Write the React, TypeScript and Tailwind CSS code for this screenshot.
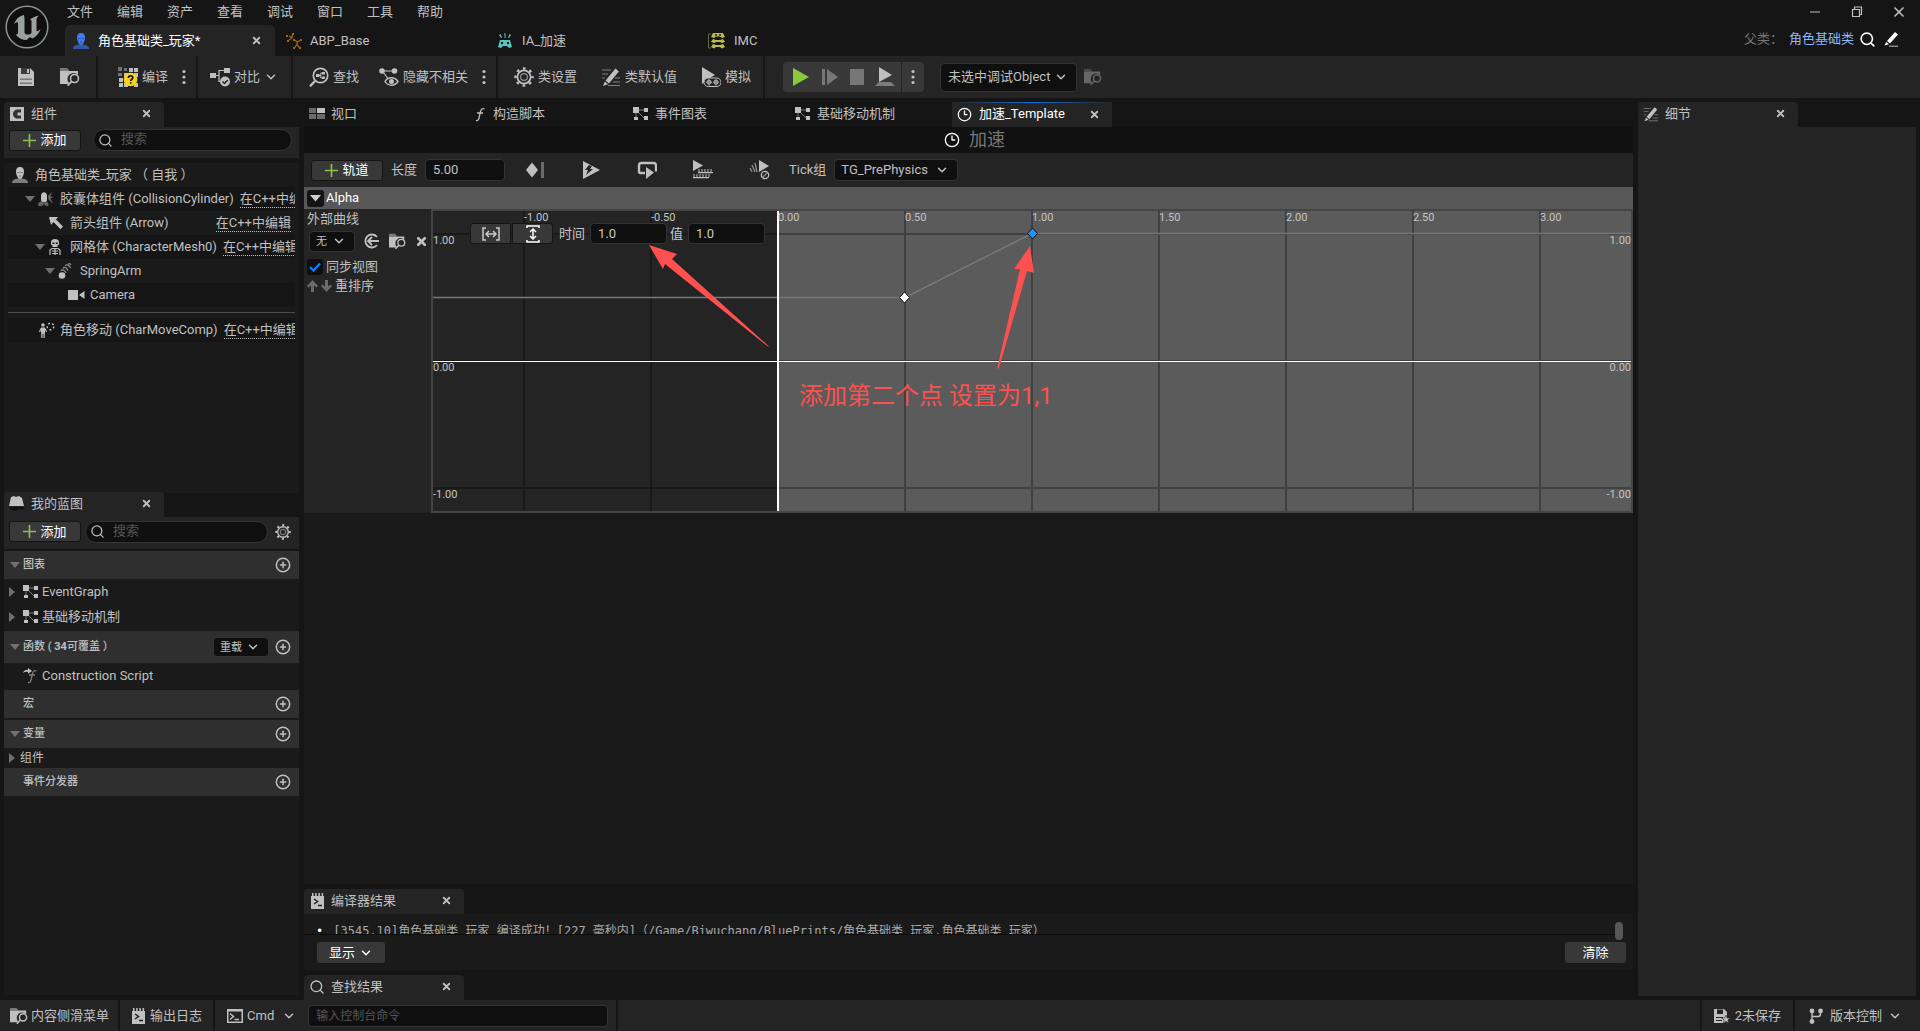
import type { ReactNode } from "react";
import { ChevronDown, CirclePlus, Search, X, Clock3, Minus } from "lucide-react";

type P = { children: ReactNode; w?: number; h?: number; vb?: string; className?: string };
const Svg = ({ children, w = 20, h = 20, vb, className = "" }: P) => (
  <svg width={w} height={h} viewBox={vb ?? `0 0 ${w} ${h}`} className={`shrink-0 ${className}`} fill="currentColor" aria-hidden="true">
    {children}
  </svg>
);

const Gear = ({ size = 20 }: { size?: number }) => (
  <Svg w={size} h={size} vb="0 0 20 20">
    <circle cx="10" cy="10" r="6.600" fill="none" stroke="currentColor" strokeWidth="1.700" />
    <circle cx="10" cy="10" r="8.500" fill="none" stroke="currentColor" strokeWidth="2.400" strokeDasharray="2.700 3.975" strokeDashoffset="1.350" />
    <circle cx="10" cy="10" r="3.400" fill="none" stroke="currentColor" strokeWidth="1.200" opacity=".7" />
  </Svg>
);
const FolderSearch = ({ size = 20 }: { size?: number }) => (
  <Svg w={size} h={size} vb="0 0 20 20">
    <path d="M0 3V1h7l2 2v1H0z" opacity=".55" />
    <path d="M0 4h18v4a6 6 0 0 0-9 8l-1 1H0z" />
    <circle cx="14.500" cy="11.500" r="4" fill="#242424" stroke="currentColor" strokeWidth="1.600" />
    <path d="m11.600 14.400-4 4.200" stroke="currentColor" strokeWidth="1.800" />
  </Svg>
);
const SaveIcon = () => (
  <Svg>
    <path d="M2 1h12l4 4v14H2z" />
    <path d="M5 1h9v6H5z" fill="#242424" opacity=".85" />
    <path d="M11 2h2v4h-2z" fill="#c0c0c0" />
    <path d="M4 11.500h12v1.500H4zm0 4h12V17H4z" fill="#777" />
  </Svg>
);
const CompileIcon = () => (
  <Svg>
    <path d="M0 0h4v4H0z" opacity=".5" />
    <path d="M6 1h3v3H6zM0 6h4v3H0z" opacity=".5" />
    <path d="M11 1h4v4h-4zM16 1h4v4h-4zM6 6h4v4H6zM11 6h4v4h-4zM16 6h4v4h-4zM1 11h4v4H1zM6 11h4v4H6zM1 16h4v4H1zM6 16h4v4H6zM16 16h4v4h-4z" />
    <circle cx="12.500" cy="12.500" r="6.800" fill="#f9d41c" />
    <path d="M10.400 11c0-3 4.400-2.800 4.400-.3 0 1.600-2.100 1.500-2.100 3.200M12.700 15.200v1.600" fill="none" stroke="#111" strokeWidth="1.700" />
  </Svg>
);
const DiffIcon = () => (
  <Svg>
    <path d="M0 6h6v5H0zM14 1h6v5h-6z" />
    <path d="M6 8.500h3V3.500h5M9 8.500v6h2" fill="none" stroke="currentColor" strokeWidth="1.200" />
    <circle cx="15" cy="14.500" r="5" />
    <path d="m12.500 14.500 2 2 3.200-3.600" fill="none" stroke="#242424" strokeWidth="1.500" />
  </Svg>
);
const FindIcon = () => (
  <Svg>
    <circle cx="11.500" cy="8.500" r="7.200" fill="none" stroke="currentColor" strokeWidth="1.700" />
    <path d="M6 14 1 19.300" stroke="currentColor" strokeWidth="2.400" />
    <path d="M7 7h3.500v3H7zM13 5h3v2.500h-3zM13 9.500h3V12h-3z" />
    <path d="M10 8.500h2M13 6h-1.200v5H13" fill="none" stroke="currentColor" />
  </Svg>
);
const HideIcon = () => (
  <Svg>
    <circle cx="3" cy="4" r="2.800" />
    <circle cx="15.500" cy="4" r="2.800" />
    <path d="M3 4h12M4 5l6 8" stroke="currentColor" strokeWidth="1.200" />
    <path d="M6 14.500c3-5 9.500-5 13 0-3.500 5-10 5-13 0z" fill="#242424" stroke="currentColor" strokeWidth="1.400" />
    <circle cx="12.500" cy="14.500" r="2.500" />
  </Svg>
);
const PencilLines = ({ size = 20 }: { size?: number }) => (
  <Svg w={size} h={size} vb="0 0 20 20">
    <path d="M1 3h9M1 7h6M1 11h3M14 11h5M12 15h7M7 18.500h12" stroke="currentColor" strokeWidth="1" opacity=".6" />
    <path d="m14.500 1.500 3.300 3L8 16.500l-3.500-3zM3.800 14.500l3.200 2.800L2 19z" />
  </Svg>
);
const SimIcon = () => (
  <Svg>
    <path d="M1 0l13 8-6 3.500L1 17z" />
    <rect x="3" y="11" width="17" height="8.500" rx="4.200" fill="#242424" stroke="currentColor" strokeWidth="1" />
    <circle cx="8" cy="15.200" r="2" fill="none" stroke="currentColor" />
    <circle cx="15" cy="15.200" r="2" fill="none" stroke="currentColor" />
    <path d="M8 12v6.500M5 15.200h6M15 12v6.500M12 15.200h6" stroke="currentColor" strokeWidth=".8" />
  </Svg>
);
const Dots = () => (
  <Svg w={4} h={16}>
    <circle cx="2" cy="2.500" r="1.600" />
    <circle cx="2" cy="8" r="1.600" />
    <circle cx="2" cy="13.500" r="1.600" />
  </Svg>
);
const GraphIcon = () => (
  <Svg w={16} h={14}>
    <path d="M0 0h6v6H0zM11 1h4v4h-4zM1 10h4v3H1zM11 9h4v4h-4z" />
    <path d="M6 3h5M5 5l6 6M3 6v4" stroke="currentColor" opacity=".6" />
  </Svg>
);
const ViewportIcon = () => (
  <Svg w={16} h={12}>
    <path d="M0 0h7v5H0z" opacity=".5" />
    <path d="M8 0h8v5H8z" />
    <path d="M0 6h7v5H0zM8 6h8v5H8z" opacity=".5" />
  </Svg>
);
const FuncIcon = ({ arrow = false }: { arrow?: boolean }) => (
  <Svg w={16} h={16}>
    <path d="M13.500 3c-2-1-3.500 0-4 2.500L8 12c-.5 2.200-1.600 3-3 2.400M6 7h6" fill="none" stroke="currentColor" strokeWidth="1.300" opacity={arrow ? 0.6 : 1} />
    {arrow && <path d="M0 5c1-3 3-3.500 5-3.200V0l4 3-4 2.800V4C3 3.600 1.500 4 0 5z" />}
  </Svg>
);
const LogIcon = () => (
  <Svg w={13} h={16}>
    <path d="M0 3h13v13H0zM1 0h1.500v3H1zM4.200 0h1.500v3H4.200zM7.400 0h1.500v3H7.400zM10.600 0h1.500v3h-1.500z" />
    <path d="m3 6 3.500 2.500L3 11M7 12.500h4" fill="none" stroke="#222" strokeWidth="1.500" />
  </Svg>
);
const TerminalIcon = () => (
  <Svg w={16} h={14}>
    <path d="M0 0h16v14H0z" />
    <path d="M1.500 2.500h13v10h-13z" fill="#242424" />
    <path d="m3 4.500 3.500 3-3.500 3M7.500 10.500H12" fill="none" stroke="currentColor" strokeWidth="1.500" />
  </Svg>
);
const Plus = () => <Svg w={13} h={13} className="text-[#8bc24a]"><path d="M5.700 0h1.600v5.700H13v1.600H7.300V13H5.700V7.300H0V5.700h5.700z" /></Svg>;
const Tri = ({ open = true }: { open?: boolean }) => (
  <Svg w={10} h={10} className="text-[#707070]">{open ? <path d="M0 2h10L5 8z" /> : <path d="M2 0v10l6-5z" />}</Svg>
);
const Person = ({ className = "" }: { className?: string }) => (
  <Svg w={16} h={16} className={className}>
    <path d="M0 16c0-3 2-3.700 6-4.500h4c4 .8 6 1.500 6 4.500z" opacity=".6" />
    <path d="M8 0c3 0 4.200 2 4 5-.3 3.500-2 7-4 7S4.300 8.500 4 5c-.2-3 1-5 4-5z" />
    <path d="M5.500 5.500h2M8.700 5.500h2M7 9h2.200" stroke="#222" strokeWidth=".9" opacity=".6" />
  </Svg>
);
const Close = () => <X size={11} strokeWidth={4} className="shrink-0 text-[#c0c0c0]" />;
const Chev = () => <ChevronDown size={14} strokeWidth={2.5} className="shrink-0" />;
const Sep = () => <span className="w-[2px] shrink-0 self-stretch bg-[#161616]" />;

const Tool = ({ icon, label, tail }: { icon: ReactNode; label: string; tail?: ReactNode }) => (
  <button className="flex items-center gap-1 whitespace-nowrap">{icon}<span>{label}</span>{tail}</button>
);
const PlusButton = ({ label }: { label: string }) => (
  <button className="flex h-[21px] w-[72px] shrink-0 items-center justify-center gap-1 rounded-[3px] border border-[#141414] bg-[#383838] text-white">
    <Plus />{label}
  </button>
);
const DockTab = ({ icon, label }: { icon: ReactNode; label: string }) => (
  <div className="flex h-[25px] w-40 items-center rounded-t-[4px] bg-[#242424] pb-[2px] pl-[5px] pr-3">
    <span className="flex w-[22px] items-center">{icon}</span>
    <span className="flex-1">{label}</span>
    <button aria-label={`关闭${label}`}><Close /></button>
  </div>
);
const SearchBox = ({ label }: { label: string }) => (
  <label className="flex h-[22px] min-w-0 flex-1 items-center gap-2 rounded-full border border-[#333] bg-[#0f0f0f] px-1">
    <Search size={15} className="shrink-0" />
    <input aria-label={label} placeholder="搜索" className="w-full min-w-0 bg-transparent pb-[2px] outline-none placeholder:text-[#555]" />
  </label>
);
const Drop = ({ value, label, box, pad = "pl-2" }: { value: string; label: string; box: string; pad?: string }) => (
  <span className={`relative flex shrink-0 items-center rounded-[4px] border border-[#333] bg-[#0f0f0f] ${box}`}>
    <select aria-label={label} className={`h-full w-full appearance-none bg-transparent outline-none ${pad}`}>
      <option>{value}</option>
    </select>
    <ChevronDown size={14} strokeWidth={2.5} className="pointer-events-none absolute right-2" />
  </span>
);

const CapsuleIcon = () => (
  <Svg w={16} h={16}>
    <path d="M3 5c0-5 6-5 6 0v4c0 3-6 3-6 0z" />
    <path d="M0 15c0-3 1-4 3-4.500 2 1.500 4 1.500 6 0 1 1.500 1.500 2.500 1.500 4.500H8l-2-2-2 2zM10 5l4-4-1.500 4.500 3 .5-3 1.500 2.500 5-4.500-4z" opacity=".45" />
  </Svg>
);
const ArrowIcon = () => <Svg w={16} h={16}><path d="M1 2h9L8 4.500l7 7-2.500 2.800L5.500 7 3 10z" /></Svg>;
const SkeletonIcon = () => (
  <Svg w={14} h={17}>
    <path d="M3 3c0-4 8-4 8 0v3H9.500v2h-5V6H3z" />
    <path d="M4.500 3.500h2v1.500h-2zM7.800 3.500h2V5h-2z" fill="#151515" />
    <path d="M2 16V11l2-1.500h6L12 11v5M7 9v7M4 12h6M4 14.500h6" fill="none" stroke="currentColor" strokeWidth="1.200" />
  </Svg>
);
const SpringIcon = () => (
  <Svg w={14} h={16}>
    <circle cx="4" cy="12.500" r="3.300" />
    <path d="M3 8c1-2 4-1 5 2M5 5.500c1-2 4-1 5 2M7.500 3c1-2 4-1 5 2M10 1c1.500-.6 2.500 0 3 1" fill="none" stroke="currentColor" strokeWidth="1.200" opacity=".7" />
  </Svg>
);
const CameraIcon = () => <Svg w={17} h={12}><path d="M0 1h10v10H0zM11 6l5.500-4v8z" /></Svg>;
const MoveIcon = () => (
  <Svg w={17} h={17}>
    <circle cx="5" cy="3" r="1.800" />
    <path d="M3 5.500h4V10h-.2v6H5.500v-4h-1v4H3.200v-6H3z" />
    <path d="M1.500 10 3 6.500M8.500 10 7 6.500" stroke="currentColor" strokeWidth="1.200" />
    <circle cx="12.500" cy="4.500" r="3.300" fill="none" stroke="currentColor" strokeWidth="1.400" strokeDasharray="2 2.200" />
  </Svg>
);

const TREE: { indent: string; icon: ReactNode; label: string; tri?: boolean; link?: boolean; alt?: boolean; end?: boolean }[] = [
  { indent: "pl-[17px]", tri: true, icon: <CapsuleIcon />, label: "胶囊体组件 (CollisionCylinder)", link: true, alt: true },
  { indent: "pl-[27px]", icon: <ArrowIcon />, label: "箭头组件 (Arrow)", link: true, end: true },
  { indent: "pl-[27px]", tri: true, icon: <SkeletonIcon />, label: "网格体 (CharacterMesh0)", link: true, alt: true },
  { indent: "pl-[37px]", tri: true, icon: <SpringIcon />, label: "SpringArm" },
  { indent: "pl-[47px]", icon: <CameraIcon />, label: "Camera", alt: true },
];
const TreeRow = ({ indent, icon, label, tri, link, alt, end }: (typeof TREE)[number]) => (
  <li className={`flex h-6 items-center overflow-hidden whitespace-nowrap ${indent} ${alt ? "bg-[#151515]" : ""}`}>
    <span className="flex w-[13px] shrink-0">{tri && <Tri />}</span>
    <span className="flex w-[22px] shrink-0">{icon}</span>
    <span>{label}</span>
    {link && (
      <a href="#edit" className={`border-b border-dotted border-[#c0c0c0] leading-4 ${end ? "ml-auto mr-1" : "ml-[6px]"}`}>在C++中编辑</a>
    )}
  </li>
);

const Section = ({ label, name, open, children, tall }: { label: ReactNode; name: string; open?: boolean; children?: ReactNode; tall?: boolean }) => (
  <div className={`flex items-center bg-[#2f2f2f] pl-[6px] pr-2 text-[11px] ${tall ? "h-8" : "h-7"}`}>
    <span className="flex w-[13px]">{open && <Tri />}</span>
    <h3 className="flex-1 font-medium">{label}</h3>
    {children}
    <button aria-label={`添加${name}`} className="ml-[6px]"><CirclePlus size={16} strokeWidth={2.2} /></button>
  </div>
);

const LeftColumn = () => (
  <aside className="flex w-[295px] shrink-0 flex-col pb-[5px]">
    <DockTab label="组件" icon={<Svg w={14} h={14} className="ml-px"><path d="M0 0h14v14H0z" /><path d="M11 2.500H6c-4 2-4 7 0 9h5v-3H7.500v-3H11z" fill="#333" /></Svg>} />
    <div className="flex h-[31px] items-center gap-3 bg-[#242424] pb-[5px] pl-[5px] pr-[7px]"><PlusButton label="添加" /><SearchBox label="搜索组件" /></div>
    <ul className="mt-[5px] h-[330px] bg-[#1a1a1a] px-1">
      <li className="flex h-6 items-center gap-[7px] pl-1"><Person />角色基础类_玩家 （ 自我 ）</li>
      {TREE.map((r) => <TreeRow key={r.label} {...r} />)}
      <li className="my-[5px] h-px bg-[#4a4a4a]" />
      <TreeRow indent="pl-[17px]" icon={<MoveIcon />} label="角色移动 (CharMoveComp)" link alt />
    </ul>
    <div className="mt-[-1px] flex flex-1 flex-col">
      <DockTab label="我的蓝图" icon={<Svg w={15} h={15}><path d="M2 1l3-1 2 1 3-1 3 2 2 8H0z" /><path d="M0 11h15l-1 3-4-1-3 2-5-1z" fill="#111" /></Svg>} />
      <div className="flex h-8 items-center bg-[#242424] pb-[3px] pl-[5px] pr-2">
        <PlusButton label="添加" /><span className="w-1" /><SearchBox label="搜索蓝图" />
        <button aria-label="设置" className="ml-[7px]"><Gear size={16} /></button>
      </div>
      <div className="mt-[2px] flex-1 bg-[#1a1a1a]">
        <Section label="图表" name="图表" open />
        <ul>
          <li className="flex h-[25px] items-center gap-[6px] pl-[3px]"><Tri open={false} /><span className="flex items-center gap-[3px]"><GraphIcon />EventGraph</span></li>
          <li className="mb-[2px] flex h-[25px] items-center gap-[6px] pl-[3px]"><Tri open={false} /><span className="flex items-center gap-[3px]"><GraphIcon />基础移动机制</span></li>
        </ul>
        <Section label={<>函数 ( <b>34</b>可覆盖 ）</>} name="函数" open tall><Drop value="重载" label="重载" box="h-5 w-14" pad="pl-[6px]" /></Section>
        <div className="mb-[2px] flex h-[25px] items-center gap-[3px] pl-[19px]"><FuncIcon arrow />Construction Script</div>
        <Section label="宏" name="宏" />
        <div className="h-[2px]" />
        <Section label="变量" name="变量" open />
        <div className="flex h-5 items-center gap-[3px] pl-[3px] text-[12px]"><Tri open={false} />组件</div>
        <Section label="事件分发器" name="事件分发器" />
      </div>
    </div>
  </aside>
);

const GRID_X = [["-1.00", 93], ["-0.50", 220], ["0.00", 347], ["0.50", 474], ["1.00", 601], ["1.50", 728], ["2.00", 855], ["2.50", 982], ["3.00", 1109]] as const;
const GRID_Y = [["1.00", 25], ["0.00", 152], ["-1.00", 279]] as const;

const Curve = () => (
  <div className="relative h-[304px] min-w-0 flex-1 overflow-hidden border-2 border-[#444] bg-[#5b5b5b]">
    <svg className="block h-full w-full" role="img" aria-label="Alpha 曲线">
      <rect width="345" height="300" fill="#242424" />
      {GRID_X.map(([t, x]) => <rect key={t} x={x - 3} width="2" height="300" className={x < 345 ? "fill-[#191919]" : "fill-[#404040]"} />)}
      {GRID_Y.map(([t, y]) => (
        <g key={t}>
          <rect y={y - 3} width="345" height="2" fill="#191919" />
          <rect x="345" y={y - 3} width="100%" height="2" fill="#404040" />
        </g>
      ))}
      <path d="M0 86.500H472L599 22.500H4000" fill="none" stroke="#787878" strokeWidth="1.500" />
      <rect y="150" width="100%" height="1" fill="#fff" />
      <rect x="344" width="2" height="300" fill="#fff" />
      <g className="text-[11px]" fill="#c4c4c4">
        {GRID_X.map(([t, x]) => <text key={t} x={x - 2} y="10">{t}</text>)}
        {GRID_Y.map(([t, y]) => (
          <g key={t}>
            <text x="0" y={y + 8}>{t}</text>
            <text x="100%" y={y + 8} textAnchor="end">{t}</text>
          </g>
        ))}
      </g>
      <path d="m471.500 81 5 5.500-5 5.500-5-5.500z" fill="#fff" stroke="#111" />
      <path d="m599.500 17 5 5.500-5 5.500-5-5.500z" fill="#1a94ff" stroke="#111" />
      <path d="M216 34 244 43 239 48 335 134.500 336 136 333 134 232 53 230 58z" fill="#ff5050" />
      <path d="M597 35 601 62 594 60 566 157 564.500 158 564.500 156 587 58 581 58z" fill="#ff5050" />
      <text x="366" y="193" fill="#ff5050" className="text-[24px]">添加第二个点 设置为1,1</text>
    </svg>
    <div className="absolute left-[37px] top-3 flex items-center text-[#c8c8c8]">
      <button aria-label="水平适配" className="flex h-[21px] w-[41px] items-center justify-center rounded-l-[3px] border border-[#141414] bg-[#383838]">
        <Svg w={18} h={14}><path d="M4 1H1v12h3M14 1h3v12h-3M4 7h10M7 4 4 7l3 3M11 4l3 3-3 3" fill="none" stroke="currentColor" strokeWidth="1.500" /></Svg>
      </button>
      <button aria-label="垂直适配" className="ml-px flex h-[21px] w-[41px] items-center justify-center rounded-r-[3px] border border-[#141414] bg-[#383838] text-white">
        <Svg w={14} h={18}><path d="M1 3V1h12v2M1 15v2h12v-2M7 4v10M4 7l3-3 3 3M4 11l3 3 3-3" fill="none" stroke="currentColor" strokeWidth="1.500" /></Svg>
      </button>
      <label className="ml-[6px] flex items-center gap-[5px]">时间<input defaultValue="1.0" className="h-[21px] w-[77px] rounded-[4px] border border-[#333] bg-[#0f0f0f] px-[7px]" /></label>
      <label className="ml-[3px] flex items-center gap-[5px]">值<input defaultValue="1.0" className="h-[21px] w-[77px] rounded-[4px] border border-[#333] bg-[#0f0f0f] px-[7px]" /></label>
    </div>
  </div>
);

const CenterTab = ({ icon, label }: { icon: ReactNode; label: string }) => (
  <button className="mr-[2px] flex h-[25px] w-40 items-center pb-[2px] pl-[5px] text-left"><span className="flex w-[22px]">{icon}</span>{label}</button>
);

const Center = () => (
  <main className="flex min-w-0 flex-1 flex-col">
    <nav className="flex">
      <CenterTab icon={<ViewportIcon />} label="视口" />
      <CenterTab icon={<FuncIcon />} label="构造脚本" />
      <CenterTab icon={<GraphIcon />} label="事件图表" />
      <CenterTab icon={<GraphIcon />} label="基础移动机制" />
      <div className="w-40 text-white">
        <div className="h-px bg-linear-to-r from-[#242424] via-[#0070e0] to-[#242424]" />
        <div className="flex h-6 items-center bg-[#242424] pb-[2px] pl-[5px] pr-3">
          <Clock3 size={15} className="mr-[7px]" /><span className="flex-1">加速_Template</span>
          <button aria-label="关闭加速_Template"><Close /></button>
        </div>
      </div>
    </nav>
    <h1 className="flex h-[26px] items-center justify-center gap-[9px] bg-[#111] pl-3 text-[18px] text-[#777]"><Clock3 size={16} className="text-white" />加速</h1>
    <div className="flex h-[34px] items-center bg-[#242424] pl-[7px]">
      <PlusButton label="轨道" />
      <label className="ml-2 flex items-center gap-2">长度<input defaultValue="5.00" className="h-[22px] w-20 rounded-[4px] border border-[#333] bg-[#0f0f0f] px-[7px] pb-[2px]" /></label>
      <button aria-label="添加关键帧" className="ml-5"><Svg><path d="m7 2.500 6 7.500-6 7.500L1 10z" /><path d="M16 2h3v16h-3z" opacity=".45" /></Svg></button>
      <button aria-label="自动播放" className="ml-9"><Svg><path d="M2 1 19 10 2 19z" /><path d="m8 5-4 5h3l-2 5 7-6H9l2-3z" fill="#242424" /></Svg></button>
      <button aria-label="循环" className="ml-9"><Svg><path d="M8 13H3.500Q2 13 2 11.500V5.500Q2 3 4.500 3h12Q19 3 19 5.500v6" fill="none" stroke="currentColor" strokeWidth="2.400" /><path d="m9 7 8 5.500L9 19z" /></Svg></button>
      <button aria-label="使用最后关键帧" className="ml-9"><Svg><path d="M0 0l10 5.500L0 11zM0 17h16v1.300H0zM5 12h15v1.300H5z" /><path d="M1 14v3M4 14v3M7 14v3M10 14v3M13 14v3M16 14v3M6 9v3M9 9v3M12 9v3M15 9v3M18 9v3" stroke="currentColor" /></Svg></button>
      <button aria-label="忽略时间膨胀" className="ml-9"><Svg w={21}><path d="m10 0 10 6-10 6z" /><circle cx="16" cy="15" r="3.700" fill="#242424" stroke="currentColor" strokeWidth="1.300" /><path d="m13.500 17.500 5-5M1 8l2 4M3 5l3 7M6 3l2 9" stroke="currentColor" strokeWidth="1.300" opacity=".7" /></Svg></button>
      <span className="ml-[19px] mr-2">Tick组</span>
      <Drop value="TG_PrePhysics" label="Tick组" box="h-[22px] w-[124px]" pad="pl-[6px]" />
    </div>
    <section className="flex flex-1 flex-col bg-[#1a1a1a]">
      <h2 className="flex h-[22px] items-center gap-[2px] bg-[#575757] pl-[3px] text-white">
        <button aria-label="折叠" className="flex size-[17px] items-center justify-center rounded-[3px] bg-[#141414] text-[#d0d0d0]"><Svg w={11} h={7}><path d="M0 0h11L5.500 6.500z" /></Svg></button>Alpha
      </h2>
      <div className="flex">
        <div className="w-[127px] shrink-0 bg-[#242424] pl-[3px]">
          <p className="pt-[1px] leading-[18px]">外部曲线</p>
          <div className="mt-[2px] flex h-[22px] items-center pl-[2px]">
            <Drop value="无" label="外部曲线" box="h-[21px] w-[46px]" pad="pl-[6px] text-[11px]" />
            <button aria-label="使用所选" className="ml-2"><Svg w={16} h={16}><path d="M14 4a6.500 6.500 0 1 0 0 8M16 8H5M9 4 5 8l4 4" fill="none" stroke="currentColor" strokeWidth="1.800" /></Svg></button>
            <button aria-label="浏览" className="ml-[10px]"><FolderSearch size={17} /></button>
            <button aria-label="清除曲线" className="ml-[9px]"><X size={13} strokeWidth={5} /></button>
          </div>
          <label className="mt-[6px] flex h-[17px] items-center gap-[3px]">
            <span className="relative flex size-4">
              <input type="checkbox" defaultChecked className="size-4 appearance-none rounded-[3px] bg-[#0f0f0f]" />
              <Svg w={16} h={16} className="pointer-events-none absolute text-[#0a84ff]"><path d="m3 8 3.500 3.500L13 4.500" fill="none" stroke="currentColor" strokeWidth="2.200" /></Svg>
            </span>同步视图
          </label>
          <div className="mt-[2px] flex h-[18px] items-center gap-[3px]">
            <button aria-label="上移" className="text-[#6a6a6a]"><Svg w={11} h={12}><path d="m5.500 0 5.500 6-1.500 1.500L7 5.500V12H4V5.500L1.500 7.500 0 6z" /></Svg></button>
            <button aria-label="下移" className="text-[#6a6a6a]"><Svg w={11} h={12}><path d="M5.500 12 0 6l1.500-1.500L4 6.500V0h3v6.500l2.500-2L11 6z" /></Svg></button>
            重排序
          </div>
        </div>
        <Curve />
      </div>
    </section>
    <section className="mt-[5px]">
      <DockTab label="编译器结果" icon={<span className="pl-[2px]"><LogIcon /></span>} />
      <div className="flex h-14 flex-col bg-[#1a1a1a] pt-2">
        <div className="flex h-[18px] justify-between pr-[10px]">
          <p className="h-[13px] flex-1 overflow-hidden whitespace-nowrap border-b border-[#0c0c0c] pl-3 font-['DejaVu_Sans_Mono','Noto_Sans_CJK_SC',monospace] text-[12px] leading-[18px] text-[#a8a8a8]"><span className="mr-[10px] text-white">•</span>[3545.10]角色基础类_玩家 编译成功！[227 毫秒内]（/Game/Biwuchang/BluePrints/角色基础类_玩家.角色基础类_玩家）</p>
          <span className="h-[18px] w-2 rounded-full bg-[#575757]" />
        </div>
        <div className="mt-[2px] flex justify-between pl-[13px] pr-[7px] text-white">
          <button className="flex h-[21px] w-[68px] items-center justify-center gap-1 rounded-[3px] bg-[#383838]">显示<Chev /></button>
          <button className="h-[21px] w-[61px] rounded-[3px] bg-[#383838]">清除</button>
        </div>
      </div>
    </section>
    <div className="mt-[5px]"><DockTab label="查找结果" icon={<Search size={16} />} /></div>
  </main>
);

export default function App() {
  return (
    <div className="flex min-h-screen flex-col bg-[#151515] font-[Roboto,'Noto_Sans_CJK_SC',sans-serif] text-[13px] leading-5 text-[#c0c0c0]">
      <header className="flex h-14">
        <div className="flex w-[65px] shrink-0 pl-1 pt-1">
          <Svg w={46} h={46} vb="4 4 46 46">
            <circle cx="27" cy="27" r="20.800" fill="#0f0f0f" stroke="#8c9494" strokeWidth="1.500" />
            <path d="M24 15C19 16 16 19 14 24c2-2 4-2.500 4-1v10c0 1.500-1 1.500-2.500 1 2.500 4 6.500 6 11 6l3.500-3 2.500 1.500c4.500-2.500 7-5.500 8-9.500-1.500 1.500-4 3.500-4 1V20c0-2 1-3 2.500-4.500-4 .5-7 2.500-9 4l1.500 1V33c-2 2-5.500 2-7 0V18.500c0-1-.3-2-.5-3.500z" fill="#98a0a0" />
          </Svg>
        </div>
        <div className="flex min-w-0 flex-1 flex-col">
          <nav className="flex h-[25px] items-center gap-6 pb-[2px] pl-[2px]">
            {["文件", "编辑", "资产", "查看", "调试", "窗口", "工具", "帮助"].map((m) => <button key={m}>{m}</button>)}
          </nav>
          <div className="flex h-[31px] items-center">
            <div className="flex h-full w-[210px] items-center rounded-t-[5px] bg-[#242424] pl-2 pr-[13px] text-white">
              <Person className="text-[#3d7cf5]" /><span className="flex-1 pl-[9px]">角色基础类_玩家*</span><button aria-label="关闭"><Close /></button>
            </div>
            <button className="flex w-[212px] items-center gap-2 pl-[11px]">
              <Svg w={16} h={16} className="text-[#a85f10]">
                <path d="M3 3 6 5M6.500 1.500 6 5l-3 2M8.500 7l3 2 3.500-2M11.500 9l-1 3-2 3M11 12l3 3" fill="none" stroke="currentColor" strokeWidth="1.300" />
                <path d="M0 2h2v2H0zM6 0h2v2H6zM1 7h2v2H1zM7 6h2v2H7zM14 6h2v2h-2zM7 14h2v2H7zM13 14h2v2h-2z" />
              </Svg>ABP_Base
            </button>
            <button className="flex w-[212px] items-center gap-[10px] pl-[11px]">
              <Svg w={14} h={16} className="text-[#5cc4bf]"><path d="M2 7h10l2 7-3 1-2-2H5l-2 2-3-1zM2.500 1l1.500 4H3L1 2zM6.500 0h1v5h-1zM11.500 1l1.500 1-2 3h-1z" /><circle cx="4" cy="10" r="1.200" fill="#151515" /><circle cx="10" cy="10" r="1.200" fill="#151515" /></Svg>IA_加速
            </button>
            <button className="flex items-center gap-[9px] pl-[9px]">
              <Svg w={17} h={16} className="text-[#b9bb52]">
                <path d="M5 0h10l2 4-3 1-2-1.500H8L6 5 3 4zM5 6l3 1h4l3-1 2 3-3 1-2-1H8l-2 1-3-1zM5 11l3 1h4l3-1 2 3-3 1.500-2-1.500H8l-2 1.500L3 14z" />
                <path d="M3 1H.500v14H3" fill="none" stroke="currentColor" opacity=".5" />
                <circle cx="8" cy="2" r=".9" fill="#151515" /><circle cx="12" cy="2" r=".9" fill="#151515" />
              </Svg>IMC
            </button>
          </div>
        </div>
        <div className="flex flex-col items-end">
          <div className="flex h-6 items-center gap-[26px] pr-[13px]">
            <button aria-label="最小化"><Minus size={16} strokeWidth={1.5} /></button>
            <button aria-label="还原"><Svg w={16} h={16}><path d="M3.500 5.500h7v7h-7zM5.500 5V3h7v7.500h-2" fill="none" stroke="currentColor" strokeWidth="1.200" /></Svg></button>
            <button aria-label="关闭窗口"><X size={16} strokeWidth={2.5} /></button>
          </div>
          <div className="flex h-[30px] items-center pr-[21px] text-white">
            <span className="text-[#777]">父类：</span>
            <a href="#parent" className="ml-[6px] text-[#8ab8ff]">角色基础类</a>
            <button aria-label="查找父类" className="ml-[5px]"><Search size={17} strokeWidth={2.3} /></button>
            <button aria-label="编辑父类" className="ml-2"><Svg w={15} h={15}><path d="m11 0 3 2.500L6 11.500 3 9zM2.200 10 5 12.200.500 13.500zM5 13.700h9v.9H5z" /></Svg></button>
          </div>
        </div>
      </header>
      <div className="flex h-[42px] items-center bg-[#242424]">
        <div className="flex gap-6 px-4"><button aria-label="保存"><SaveIcon /></button><button aria-label="浏览"><FolderSearch /></button></div>
        <Sep />
        <div className="flex items-center gap-[14px] pl-5 pr-[10px]"><Tool icon={<CompileIcon />} label="编译" /><button aria-label="编译选项"><Dots /></button></div>
        <Sep />
        <div className="pl-3 pr-[13px]"><Tool icon={<DiffIcon />} label="对比" tail={<Chev />} /></div>
        <Sep />
        <div className="flex items-center gap-5 pl-4"><Tool icon={<FindIcon />} label="查找" /><Tool icon={<HideIcon />} label="隐藏不相关" /></div>
        <button aria-label="隐藏选项" className="pl-[14px] pr-[10px]"><Dots /></button>
        <Sep />
        <div className="flex items-center gap-6 pl-4 pr-3"><Tool icon={<Gear />} label="类设置" /><Tool icon={<PencilLines />} label="类默认值" /><Tool icon={<SimIcon />} label="模拟" /></div>
        <Sep />
        <div className="ml-[18px] flex h-[30px] items-center rounded-[4px] bg-[#383838] pl-[9px]">
          <button aria-label="播放"><Svg w={18} h={18} className="text-[#8bc83c]"><path d="M1 0 17 9 1 18z" /></Svg></button>
          <button aria-label="步进" className="ml-[11px] text-[#777]"><Svg w={18} h={18}><path d="M1 1h3v16H1zM6 1l11 8-11 8z" /></Svg></button>
          <button aria-label="停止" className="ml-[10px] text-[#777]"><Svg w={16} h={16}><path d="M1 0h14v16H1z" /></Svg></button>
          <button aria-label="弹出" className="ml-[10px]"><Svg><path d="M4 0 17 8 4 15z" /><path d="M0 19l4-4h12l4 4z" opacity=".5" /></Svg></button>
          <span className="ml-[6px] h-full w-px bg-[#222]" />
          <button aria-label="播放选项" className="px-[9px]"><Dots /></button>
        </div>
        <span className="w-4" />
        <Drop value="未选中调试Object" label="调试对象" box="h-[29px] w-[137px]" pad="pl-[7px]" />
        <button aria-label="浏览调试对象" className="ml-[7px] text-[#666]"><FolderSearch size={18} /></button>
      </div>
      <div className="flex flex-1 pl-1 pt-1">
        <LeftColumn />
        <span className="w-[5px] shrink-0" />
        <Center />
        <aside className="ml-[5px] mr-1 flex w-[278px] shrink-0 flex-col pb-1">
          <DockTab label="细节" icon={<PencilLines size={16} />} />
          <div className="flex-1 bg-[#242424]" />
        </aside>
      </div>
      <footer className="flex h-[31px] items-center whitespace-nowrap bg-[#242424]">
        <button className="flex items-center gap-[3px] pl-[10px] pr-[9px] pt-px"><FolderSearch size={18} />内容侧滑菜单</button>
        <Sep />
        <button className="flex items-center gap-[5px] pl-3 pr-[11px] pt-px"><LogIcon />输出日志</button>
        <Sep />
        <button className="flex items-center gap-1 pl-3 pr-3 pt-px"><TerminalIcon />Cmd<span className="pl-1"><Chev /></span></button>
        <input aria-label="控制台命令" placeholder="输入控制台命令" className="h-[22px] w-[300px] rounded-[4px] border border-[#333] bg-[#0f0f0f] px-[7px] text-[12px] placeholder:text-[#555]" />
        <span className="w-2" />
        <Sep />
        <span className="flex-1" />
        <Sep />
        <button className="flex items-center gap-1 px-3 pt-px"><Svg w={17} h={16}><path d="M0 1h10l3 3v5l-3 6H0z" /><path d="M3 1.500h6V6H3zM2 9h7v1H2zm0 3h6v1H2z" fill="#242424" /><path d="m12 7 1.200 3 3.300.1-2.600 2 1 3.300-2.900-1.900-2.800 1.900 1-3.200-2.600-2.100 3.200-.1z" stroke="#242424" strokeWidth=".6" /></Svg>2未保存</button>
        <Sep />
        <button className="flex items-center gap-[6px] pl-[14px] pr-[18px] pt-px"><Svg w={15} h={16}><circle cx="3" cy="3" r="2.400" /><circle cx="11.500" cy="3" r="2.400" /><circle cx="3" cy="13.500" r="2.400" /><path d="M3 3v10M11.500 3v3q0 2.500-2.500 2.500H3" fill="none" stroke="currentColor" strokeWidth="1.400" /></Svg>版本控制<Chev /></button>
      </footer>
    </div>
  );
}
